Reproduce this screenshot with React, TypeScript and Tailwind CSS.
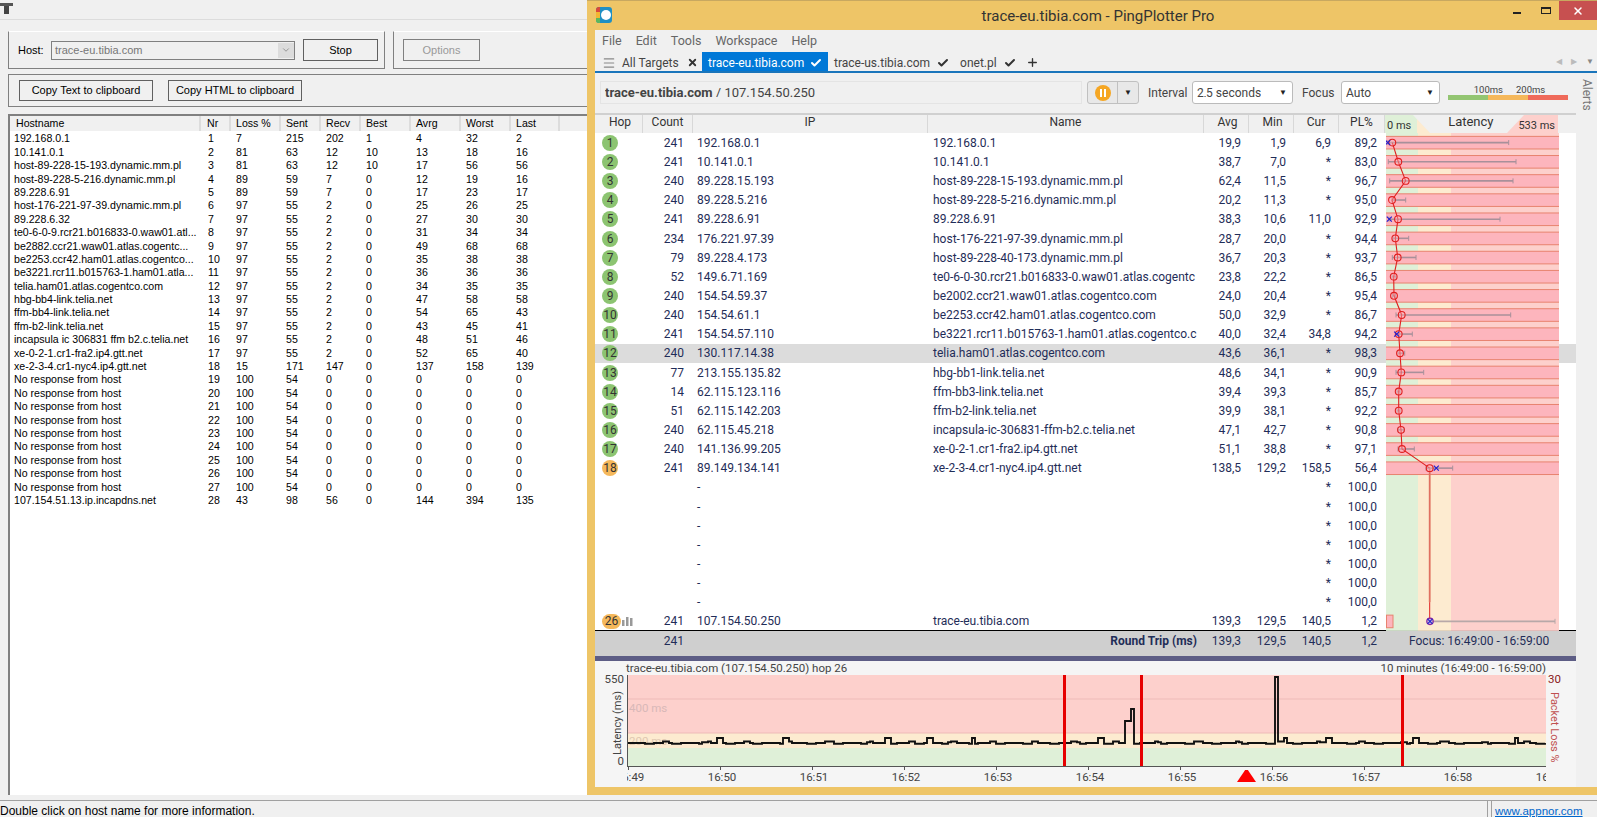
import { Check, X, Plus, Menu, ChevronDown } from 'lucide-react'

const leftCols = ['w-[191px]', 'w-[30px]', 'w-[50px]', 'w-[40px]', 'w-[40px]', 'w-[50px]', 'w-[50px]', 'w-[50px]', 'w-[49px]']
const leftHeaders = ['Hostname', 'Nr', 'Loss %', 'Sent', 'Recv', 'Best', 'Avrg', 'Worst', 'Last']

const noResp = [19, 20, 21, 22, 23, 24, 25, 26, 27].map(n => ['No response from host', n, 100, 54, 0, 0, 0, 0, 0])

const leftRows: (string | number)[][] = [
  ['192.168.0.1', 1, 7, 215, 202, 1, 4, 32, 2],
  ['10.141.0.1', 2, 81, 63, 12, 10, 13, 18, 16],
  ['host-89-228-15-193.dynamic.mm.pl', 3, 81, 63, 12, 10, 17, 56, 56],
  ['host-89-228-5-216.dynamic.mm.pl', 4, 89, 59, 7, 0, 12, 19, 16],
  ['89.228.6.91', 5, 89, 59, 7, 0, 17, 23, 17],
  ['host-176-221-97-39.dynamic.mm.pl', 6, 97, 55, 2, 0, 25, 26, 25],
  ['89.228.6.32', 7, 97, 55, 2, 0, 27, 30, 30],
  ['te0-6-0-9.rcr21.b016833-0.waw01.atl...', 8, 97, 55, 2, 0, 31, 34, 34],
  ['be2882.ccr21.waw01.atlas.cogentc...', 9, 97, 55, 2, 0, 49, 68, 68],
  ['be2253.ccr42.ham01.atlas.cogentco...', 10, 97, 55, 2, 0, 35, 38, 38],
  ['be3221.rcr11.b015763-1.ham01.atla...', 11, 97, 55, 2, 0, 36, 36, 36],
  ['telia.ham01.atlas.cogentco.com', 12, 97, 55, 2, 0, 34, 35, 35],
  ['hbg-bb4-link.telia.net', 13, 97, 55, 2, 0, 47, 58, 58],
  ['ffm-bb4-link.telia.net', 14, 97, 55, 2, 0, 54, 65, 43],
  ['ffm-b2-link.telia.net', 15, 97, 55, 2, 0, 43, 45, 41],
  ['incapsula ic 306831 ffm b2.c.telia.net', 16, 97, 55, 2, 0, 48, 51, 46],
  ['xe-0-2-1.cr1-fra2.ip4.gtt.net', 17, 97, 55, 2, 0, 52, 65, 40],
  ['xe-2-3-4.cr1-nyc4.ip4.gtt.net', 18, 15, 171, 147, 0, 137, 158, 139],
  ...noResp,
  ['107.154.51.13.ip.incapdns.net', 28, 43, 98, 56, 0, 144, 394, 135],
]

type Hop = [number, string, string, string, string, string, string, string]

const hops: Hop[] = [
  [1, '241', '192.168.0.1', '192.168.0.1', '19,9', '1,9', '6,9', '89,2'],
  [2, '241', '10.141.0.1', '10.141.0.1', '38,7', '7,0', '*', '83,0'],
  [3, '240', '89.228.15.193', 'host-89-228-15-193.dynamic.mm.pl', '62,4', '11,5', '*', '96,7'],
  [4, '240', '89.228.5.216', 'host-89-228-5-216.dynamic.mm.pl', '20,2', '11,3', '*', '95,0'],
  [5, '241', '89.228.6.91', '89.228.6.91', '38,3', '10,6', '11,0', '92,9'],
  [6, '234', '176.221.97.39', 'host-176-221-97-39.dynamic.mm.pl', '28,7', '20,0', '*', '94,4'],
  [7, '79', '89.228.4.173', 'host-89-228-40-173.dynamic.mm.pl', '36,7', '20,3', '*', '93,7'],
  [8, '52', '149.6.71.169', 'te0-6-0-30.rcr21.b016833-0.waw01.atlas.cogentc', '23,8', '22,2', '*', '86,5'],
  [9, '240', '154.54.59.37', 'be2002.ccr21.waw01.atlas.cogentco.com', '24,0', '20,4', '*', '95,4'],
  [10, '240', '154.54.61.1', 'be2253.ccr42.ham01.atlas.cogentco.com', '50,0', '32,9', '*', '86,7'],
  [11, '241', '154.54.57.110', 'be3221.rcr11.b015763-1.ham01.atlas.cogentco.c', '40,0', '32,4', '34,8', '94,2'],
  [12, '240', '130.117.14.38', 'telia.ham01.atlas.cogentco.com', '43,6', '36,1', '*', '98,3'],
  [13, '77', '213.155.135.82', 'hbg-bb1-link.telia.net', '48,6', '34,1', '*', '90,9'],
  [14, '14', '62.115.123.116', 'ffm-bb3-link.telia.net', '39,4', '39,3', '*', '85,7'],
  [15, '51', '62.115.142.203', 'ffm-b2-link.telia.net', '39,9', '38,1', '*', '92,2'],
  [16, '240', '62.115.45.218', 'incapsula-ic-306831-ffm-b2.c.telia.net', '47,1', '42,7', '*', '90,8'],
  [17, '240', '141.136.99.205', 'xe-0-2-1.cr1-fra2.ip4.gtt.net', '51,1', '38,8', '*', '97,1'],
  [18, '241', '89.149.134.141', 'xe-2-3-4.cr1-nyc4.ip4.gtt.net', '138,5', '129,2', '158,5', '56,4'],
]

// latency marks per hop, px from the left of the chart: avg, min, max, cur
const marks: [number, number, number, number | null][] = [
  [6.3, 2, 122.7, 1.7],
  [12.3, 2.3, 130, null],
  [19.7, 3.7, 127, null],
  [6, 6, 19.7, null],
  [12, 3, 114, 3.3],
  [9.3, 7, 22.7, null],
  [11.7, 6.3, 30, null],
  [7.7, 6, 10, null],
  [8, 6.5, 9.5, null],
  [15.7, 10, 124.7, null],
  [12.7, 10, 26.3, 10.7],
  [14, 12, 18.7, null],
  [15.3, 10, 37.7, null],
  [12.7, 11, 14, null],
  [12.7, 11, 14, null],
  [15, 12, 18, null],
  [16, 12, 28.3, null],
  [43.7, 40, 66.7, 50.3],
]

const ROW = 19.15
const rowMid = (i: number) => ROW * i + ROW / 2

function LatencyChart() {
  const h = ROW * 26
  return (
    <svg width="173" height={h} className="absolute right-[17px] top-0">
      <rect x="0" y="0" width="32" height={h} fill="#dff0d8" />
      <rect x="32" y="0" width="33" height={h} fill="#fdebd0" />
      <rect x="65" y="0" width="108" height={h} fill="#fdd0cc" />
      {marks.map((_, i) => (
        <rect key={i} x="-1" y={rowMid(i) - 6.2} width="175" height="12.6" fill="#fdb5bd" stroke="#e8836f" />
      ))}
      <rect x="0.5" y={rowMid(25) - 6.2} width="6.5" height="12.6" fill="#fdb5bd" stroke="#e8836f" />
      <line x1="43.7" y1={rowMid(17)} x2="43.7" y2={rowMid(24)} stroke="#e07060" strokeWidth="1.8" />
      <line x1="43.7" y1={rowMid(24)} x2="43.7" y2={rowMid(25)} stroke="#e02020" strokeWidth="1" />
      {marks.map((m, i) => (
        <g key={i}>
          <line x1={m[1]} y1={rowMid(i)} x2={m[2]} y2={rowMid(i)} stroke="#a8909a" strokeWidth="1.6" />
          <line x1={m[1]} y1={rowMid(i) - 2.5} x2={m[1]} y2={rowMid(i) + 2.5} stroke="#a8909a" />
          <line x1={m[2]} y1={rowMid(i) - 2.5} x2={m[2]} y2={rowMid(i) + 2.5} stroke="#a8909a" />
        </g>
      ))}
      <polyline
        points={marks.map((m, i) => `${m[0]},${rowMid(i)}`).join(' ')}
        fill="none"
        stroke="#e02020"
        strokeWidth="1.1"
      />
      {marks.map((m, i) => (
        <g key={i}>
          <circle cx={m[0]} cy={rowMid(i)} r="3.4" fill="#fdb5bd" fillOpacity="0.4" stroke="#e02020" strokeWidth="1.1" />
          {m[3] !== null && (
            <path
              d={`M${m[3] - 2.5} ${rowMid(i) - 2.5}l5 5M${m[3] + 2.5} ${rowMid(i) - 2.5}l-5 5`}
              stroke="#2020d0"
              strokeWidth="1.2"
            />
          )}
        </g>
      ))}
      <line x1="46" y1={rowMid(25)} x2="169" y2={rowMid(25)} stroke="#b8a8a8" strokeWidth="1.6" />
      <line x1="169" y1={rowMid(25) - 2.5} x2="169" y2={rowMid(25) + 2.5} stroke="#b8a8a8" />
      <circle cx="44" cy={rowMid(25)} r="3.2" fill="#c8b8d8" stroke="#8020a0" strokeWidth="1.2" />
      <path
        d={`M41.5 ${rowMid(25) - 2.5}l5 5M46.5 ${rowMid(25) - 2.5}l-5 5`}
        stroke="#2020d0"
        strokeWidth="1.1"
      />
    </svg>
  )
}

function HopBadge({ n }: { n: number }) {
  if (n === 26) {
    return (
      <div className="flex items-center">
        <span className="w-[19px] h-[15px] rounded-full bg-[#f5b85b] text-[#333] flex items-center justify-center">26</span>
        <svg width="12" height="10" className="ml-[1px]">
          <rect x="0" y="4" width="2.5" height="6" fill="#999" />
          <rect x="4" y="1" width="2.5" height="9" fill="#999" />
          <rect x="8" y="2" width="2.5" height="8" fill="#999" />
        </svg>
      </div>
    )
  }
  const color = n === 18 ? 'bg-[#f5b85b]' : 'bg-[#8cc471]'
  return <span className={`${color} w-4 h-4 rounded-full text-[#333] flex items-center justify-center`}>{n}</span>
}

function HopRow({ hop }: { hop: Hop }) {
  const [n, count, ip, name, avg, min, cur, pl] = hop
  return (
    <div className={`flex items-center h-[19.15px] ${n === 12 ? 'bg-[#dcdcdc]' : ''}`}>
      <div className="w-[48px] pl-[7px] flex items-center"><HopBadge n={n} /></div>
      <div className="w-[50px] text-right pr-[9px]">{count}</div>
      <div className="w-[235px] pl-[4px]">{ip}</div>
      <div className="w-[276px] pl-[5px] whitespace-nowrap overflow-hidden">{name}</div>
      <div className="w-[45px] text-right pr-[8px]">{avg}</div>
      <div className="w-[45px] text-right pr-[8px]">{min}</div>
      <div className="w-[45px] text-right pr-[8px]">{cur}</div>
      <div className="w-[46px] text-right pr-[8px]">{pl}</div>
    </div>
  )
}

function EmptyRow() {
  return (
    <div className="flex items-center h-[19.15px]">
      <div className="w-[98px]" />
      <div className="w-[511px] pl-[4px]">-</div>
      <div className="w-[45px]" />
      <div className="w-[45px]" />
      <div className="w-[45px] text-right pr-[8px]">*</div>
      <div className="w-[46px] text-right pr-[8px]">100,0</div>
    </div>
  )
}

// black latency trace in the bottom graph
function tracePath() {
  const bumps = [90, 155, 343, 257, 655, 698, 786, 886, 300, 470]
  let d = 'M0 68'
  for (let x = 0; x < 919; x += 3) {
    let y = 68 + ((x % 27) > 15 ? 0.8 : 0) + ((x % 41) > 33 ? -1.5 : 0)
    if (bumps.some(b => x >= b && x < b + 5)) y = 63
    if (x >= 498 && x < 502) y = 46
    if (x >= 502 && x < 506) y = 34
    if (x >= 646 && x < 650) y = 2
    d += ` H${x} V${y}`
  }
  return d
}

function Plot() {
  return (
    <svg width="919" height="95" className="block shrink-0">
      <rect x="0" y="0" width="919" height="58" fill="#fdd0cc" />
      <rect x="0" y="58" width="919" height="15" fill="#fdebd0" />
      <rect x="0" y="73" width="919" height="18" fill="#dff0d8" />
      <line x1="0" y1="24" x2="919" y2="24" stroke="#eebbb8" />
      <line x1="0" y1="58" x2="919" y2="58" stroke="#eebbb8" />
      <text x="2" y="37" fontSize="11.5" fontFamily="Roboto, sans-serif" fill="#d8b8b8">400 ms</text>
      <text x="2" y="70" fontSize="11.5" fontFamily="Roboto, sans-serif" fill="#e0c8b0">200 ms</text>
      <path d={tracePath()} fill="none" stroke="#111" strokeWidth="1.9" />
      <rect x="436" y="0" width="3" height="91" fill="#e60000" />
      <rect x="513" y="0" width="3" height="91" fill="#e60000" />
      <rect x="774" y="0" width="3" height="91" fill="#e60000" />
      <line x1="0" y1="91.5" x2="919" y2="91.5" stroke="#555" />
      <line x1="0.5" y1="0" x2="0.5" y2="91" stroke="#555" />
      {[0, 1, 2, 3, 4, 5, 6, 7, 8, 9].map(i => (
        <line key={i} x1={1.5 + 92 * i} y1="92" x2={1.5 + 92 * i} y2="95" stroke="#555" />
      ))}
    </svg>
  )
}

export default function App() {
  return (
    <div className="w-[1603px] h-[817px] overflow-hidden bg-white font-['Liberation_Sans',sans-serif]">
      <div className="w-[1597px] h-full flex flex-col bg-[#f0f0f0]">
        <div className="flex h-[795px]">
          {/* traceroute window */}
          <div className="w-[587px] shrink-0 flex flex-col text-[10.6px] text-black">
            <div className="h-[20px] border-b border-[#dcdcdc] pt-[1px]">
              <svg width="14" height="14">
                <rect x="0" y="2" width="13" height="3" fill="#555" />
                <rect x="4" y="5" width="5" height="8" fill="#444" />
              </svg>
            </div>
            <div className="flex h-[38px] mt-[11px] ml-[8px] text-[11px]">
              <div className="w-[377px] border-x border-b border-[#808080] flex items-center pl-[9px] border-t-white border-t">
                <span className="w-[33px]">Host:</span>
                <div className="w-[244px] h-[19px] border border-[#808080] bg-[#f0f0f0] flex items-center pl-[3px] text-[#777] justify-between">
                  <span>trace-eu.tibia.com</span>
                  <span className="w-[16px] h-[15px] bg-[#dcdcdc] flex items-center justify-center">
                    <ChevronDown size={10} className="text-[#888]" />
                  </span>
                </div>
                <button className="ml-[8px] w-[75px] h-[22px] border border-[#606060]">Stop</button>
              </div>
              <div className="flex-1 ml-[8px] border-l border-b border-[#808080] flex items-center pl-[9px] border-t border-t-white">
                <button className="w-[77px] h-[22px] border border-[#808080] text-[#999]">Options</button>
              </div>
            </div>
            <div className="h-[33px] mt-[5px] ml-[8px] border-y border-l border-[#808080] flex items-center pl-[10px] gap-[15px] text-[11px]">
              <button className="w-[134px] h-[21px] border border-[#606060]">Copy Text to clipboard</button>
              <button className="w-[134px] h-[21px] border border-[#606060]">Copy HTML to clipboard</button>
            </div>
            <div className="flex-1 mt-[7px] ml-[8px] border-t-2 border-l-2 border-[#808080] bg-white">
              <div className="flex h-[15px] bg-[#f0f0f0] items-center">
                {leftHeaders.map((t, i) => (
                  <div key={t} className={`${leftCols[i]} h-full border-r-2 border-[#dcdcdc] leading-[15px] ${i < 2 ? 'pl-[6px]' : 'pl-[5px]'}`}>{t}</div>
                ))}
              </div>
              <div className="pt-[1px]">
                {leftRows.map(r => (
                  <div key={String(r[1])} className="flex h-[13.4px] items-center leading-none">
                    {r.map((c, i) => (
                      <div key={i} className={`${leftCols[i]} whitespace-nowrap ${i === 0 ? 'pl-[4px]' : i === 1 ? 'pl-[7px]' : 'pl-[5px]'}`}>{c}</div>
                    ))}
                  </div>
                ))}
              </div>
            </div>
          </div>

          {/* PingPlotter window */}
          <div className="flex-1 flex flex-col bg-[#eec567] border-t border-[#c8a860] font-['Roboto',sans-serif]">
            <div className="h-[29px] shrink-0 flex items-start">
              <div className="ml-[9px] mt-[6px] w-[16px] h-[16px] rounded-[3px] bg-[#1e8fc4] flex items-center overflow-hidden">
                <span className="w-[4px] h-full flex flex-col">
                  <span className="h-1/3 bg-[#d9483b]" />
                  <span className="h-1/3 bg-[#f2b632]" />
                  <span className="h-1/3 bg-[#5cb85c]" />
                </span>
                <span className="w-[10px] h-[10px] rounded-full bg-white ml-[1px]" />
              </div>
              <div className="flex-1 text-center pt-[4px] text-[15px] text-[#333] pl-[79px]">trace-eu.tibia.com - PingPlotter Pro</div>
              <div className="flex items-start text-[#222]">
                <div className="w-[24px] h-[19px] flex items-center justify-center"><span className="w-[8px] h-[2px] bg-[#222] mt-[4px]" /></div>
                <div className="w-[30px] h-[19px] flex items-center justify-center pl-[3px]"><span className="w-[10px] h-[7px] border border-[#222] border-t-2" /></div>
                <div className="w-[38px] h-[19px] bg-[#c75050] flex items-center justify-center"><X size={12} strokeWidth={3} className="text-white" /></div>
              </div>
            </div>
            <div className="flex-1 ml-[8px] mb-[8px] bg-[#f0f0f0] flex flex-col min-h-0">
              <div className="h-[22px] flex items-center gap-[14px] pl-[7px] text-[12.5px] text-[#666]">
                <span>File</span>
                <span>Edit</span>
                <span>Tools</span>
                <span>Workspace</span>
                <span>Help</span>
              </div>
              <div className="h-[21px] flex items-stretch text-[12px] text-[#444] border-b-2 border-[#1a75bb] pt-[1px]">
                <div className="flex items-center pl-[7px] w-[107px] pt-[1px]">
                  <Menu size={14} className="text-[#888]" />
                  <span className="ml-[6px]">All Targets</span>
                  <X size={11} strokeWidth={4} className="ml-[8px] text-[#333]" />
                </div>
                <div className="w-[126px] bg-[#0078d7] text-white flex items-center justify-between px-[6px] -mt-[1px] pt-[2px]">
                  <span>trace-eu.tibia.com</span>
                  <Check size={12} strokeWidth={4} />
                </div>
                <div className="flex items-center pl-[6px] pt-[1px]">
                  <span>trace-us.tibia.com</span>
                  <Check size={12} strokeWidth={4} className="ml-[7px] text-[#333]" />
                </div>
                <div className="flex items-center pl-[11px] pt-[1px]">
                  <span>onet.pl</span>
                  <Check size={12} strokeWidth={4} className="ml-[7px] text-[#333]" />
                  <Plus size={13} strokeWidth={2.5} className="ml-[10px] text-[#333]" />
                </div>
                <div className="flex-1 flex items-center justify-end gap-[9px] pr-[3px] text-[#bbb] text-[8px]">
                  <span>◀</span>
                  <span>▶</span>
                  <span className="text-[#888]">▼</span>
                </div>
              </div>
              <div className="flex flex-1 min-h-0">
                <div className="w-[981px] flex flex-col">
                  {/* toolbar */}
                  <div className="h-[40px] flex items-center pl-[5px] text-[12px] text-[#444]">
                    <div className="w-[482px] h-[23px] border border-[#e4e4e4] pl-[4px] pt-[3px] text-[13px]">
                      <div className="h-[12px] overflow-hidden leading-[16px]"><b className="font-bold">trace-eu.tibia.com</b> / 107.154.50.250</div>
                    </div>
                    <div className="ml-[5px] w-[52px] h-[23px] border border-[#c0c0c0] rounded-[3px] bg-[#e8e8e8] flex">
                      <div className="w-[30px] border-r border-[#c0c0c0] flex items-center justify-center">
                        <span className="w-[16px] h-[16px] rounded-full bg-[#f5a623] flex items-center justify-center gap-[2px]">
                          <span className="w-[2px] h-[8px] bg-white" />
                          <span className="w-[2px] h-[8px] bg-white" />
                        </span>
                      </div>
                      <div className="flex-1 flex items-center justify-center text-[#222] text-[8px]">▼</div>
                    </div>
                    <span className="ml-[9px] w-[44px]">Interval</span>
                    <div className="w-[101px] h-[23px] border border-[#bbb] rounded-[3px] bg-white flex justify-between pl-[4px] pr-[5px] pt-[3px]">
                      <div className="h-[12px] overflow-hidden leading-[16px]">2,5 seconds</div>
                      <span className="text-[8px] text-[#222] leading-[16px]">▼</span>
                    </div>
                    <span className="ml-[9px] w-[39px]">Focus</span>
                    <div className="w-[99px] h-[23px] border border-[#bbb] rounded-[3px] bg-white flex justify-between pl-[4px] pr-[5px] pt-[3px]">
                      <div className="h-[12px] overflow-hidden leading-[16px]">Auto</div>
                      <span className="text-[8px] text-[#222] leading-[16px]">▼</span>
                    </div>
                    <div className="ml-[8px] w-[120px] flex flex-col -mt-[2px]">
                      <div className="flex justify-center gap-[13px] text-[9.5px] leading-[11px] text-[#444] pl-[3px]">
                        <span>100ms</span>
                        <span>200ms</span>
                      </div>
                      <div className="flex h-[5px]">
                        <div className="w-[40px] bg-[#93c572]" />
                        <div className="w-[40px] bg-[#f5b85b]" />
                        <div className="w-[40px] bg-[#ef6a5a]" />
                      </div>
                    </div>
                  </div>

                  {/* hop table */}
                  <div className="relative flex text-[12px] text-[#333] h-[21px] bg-[#f0f0f0] border-t-2 border-[#d0d0d0]">
                    {[['Hop', 'w-[48px] pl-[3px]'], ['Count', 'w-[50px]'], ['IP', 'w-[235px]'], ['Name', 'w-[276px]'], ['Avg', 'w-[45px] pl-[3px]'], ['Min', 'w-[45px] pl-[3px]'], ['Cur', 'w-[45px]'], ['PL%', 'w-[46px]']].map(([t, w]) => (
                      <div key={t} className={`${w} text-center border-r border-[#d8d8d8] leading-[15px]`}>{t}</div>
                    ))}
                    <div className="w-[173px] relative flex items-start justify-between">
                      <svg width="173" height="19" className="absolute left-0 top-0">
                        <rect x="0" y="0" width="32" height="19" fill="#dff0d8" />
                        <rect x="32" y="0" width="33" height="19" fill="#fdebd0" />
                        <rect x="65" y="0" width="108" height="19" fill="#fdd0cc" />
                        <polygon points="28,0 45,18 122,18 139,0" fill="#f0f0f0" />
                      </svg>
                      <span className="relative ml-[2px] mt-[4px] text-[11px] leading-[14px]">0 ms</span>
                      <span className="relative text-[13px] leading-[14px] ml-[12px]">Latency</span>
                      <span className="relative mr-[3px] mt-[4px] text-[11px] leading-[14px]">533 ms</span>
                    </div>
                    <div className="w-[17px]" />
                  </div>
                  <div className="relative h-[497px] bg-white text-[12px] text-[#1f2d58]">
                    {hops.map(h => <HopRow key={h[0]} hop={h} />)}
                    {[0, 1, 2, 3, 4, 5, 6].map(i => <EmptyRow key={i} />)}
                    <HopRow hop={[26, '241', '107.154.50.250', 'trace-eu.tibia.com', '139,3', '129,5', '140,5', '1,2']} />
                    <LatencyChart />
                  </div>

                  {/* round trip */}
                  <div className="h-[26px] bg-[#cfcfcf] border-t border-black flex items-center text-[12px] text-[#1f2d58] pb-[6px]">
                    <div className="w-[48px]" />
                    <div className="w-[50px] text-right pr-[9px]">241</div>
                    <div className="w-[511px] text-right pr-[7px] font-bold">Round Trip (ms)</div>
                    <div className="w-[45px] text-right pr-[8px]">139,3</div>
                    <div className="w-[45px] text-right pr-[8px]">129,5</div>
                    <div className="w-[45px] text-right pr-[8px]">140,5</div>
                    <div className="w-[46px] text-right pr-[8px]">1,2</div>
                    <div className="w-[190px] pl-[24px] whitespace-nowrap">Focus: 16:49:00 - 16:59:00</div>
                  </div>
                  <div className="h-[5px] bg-[#5d5d85]" />

                  {/* time graph */}
                  <div className="flex-1 bg-[#f5f5f5] flex flex-col text-[#444]">
                    <div className="h-[14px] flex justify-between pl-[31px] pr-[30px] text-[11.5px] leading-[14px]">
                      <span>trace-eu.tibia.com (107.154.50.250) hop 26</span>
                      <span>10 minutes (16:49:00 - 16:59:00)</span>
                    </div>
                    <div className="flex">
                      <div className="w-[32px] h-[91px] flex flex-col items-end pr-[3px] text-[11px] leading-[13px]">
                        <span className="-mt-[2px] text-[11.5px]">550</span>
                        <span className="[writing-mode:vertical-rl] rotate-180 mt-[5px] leading-[13px] whitespace-nowrap">Latency (ms)</span>
                        <span className="mt-auto text-[11.5px]">0</span>
                      </div>
                      <Plot />
                      <div className="h-[91px] pl-[2px] flex flex-col text-[11.5px] leading-[13px] text-[#8b2020]">
                        <span className="-mt-[2px]">30</span>
                        <span className="[writing-mode:vertical-rl] text-[11px] text-[#c05050] mt-[6px] leading-[13px] whitespace-nowrap">Packet Loss %</span>
                      </div>
                    </div>
                    <div className="relative ml-[32px] w-[919px] h-[17px] overflow-hidden">
                      <div className="flex -ml-[43px] text-[11.5px] leading-[14px] text-[#444]">
                        {['16:49', '16:50', '16:51', '16:52', '16:53', '16:54', '16:55', '16:56', '16:57', '16:58', '16:59'].map(t => (
                          <span key={t} className="w-[92px] shrink-0 text-center">{t}</span>
                        ))}
                      </div>
                      <svg width="20" height="15" className="absolute left-[610px] -top-[2px]">
                        <polygon points="0,14 19,14 9.5,0" fill="#ff0000" />
                      </svg>
                    </div>
                  </div>
                </div>
                <div className="flex-1 flex justify-center pt-[6px]">
                  <span className="[writing-mode:vertical-rl] text-[12px] text-[#777] leading-none h-fit">Alerts</span>
                </div>
              </div>
            </div>
          </div>
        </div>

        {/* status bar */}
        <div className="h-[5px] shrink-0" />
        <div className="flex-1 border-t border-[#a0a0a0] flex text-[11.5px] text-black">
          <div className="flex-1 border-r border-[#a0a0a0] mr-[3px] text-[12px] leading-[13px] pt-[4px]">Double click on host name for more information.</div>
          <div className="w-[106px] border-l border-[#a0a0a0] pl-[3px] pt-[4px] leading-[13px] text-[#0066cc] underline">www.appnor.com</div>
        </div>
      </div>
    </div>
  )
}
